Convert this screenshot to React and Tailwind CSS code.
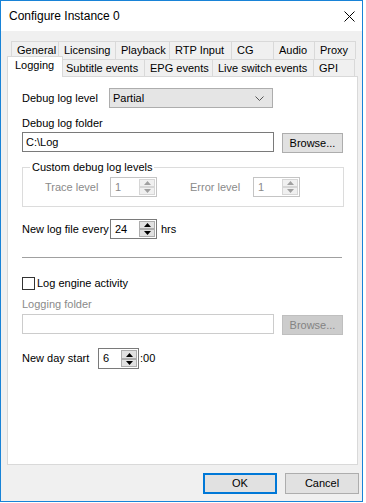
import React from "react";

function Arrow({ up, disabled }) {
  return (
    <svg width="7" height="4" viewBox="0 0 7 4">
      <path
        d={up ? "M3.5 0L7 4H0z" : "M0 0H7L3.5 4z"}
        fill={disabled ? "#a0a0a0" : "#000"}
      />
    </svg>
  );
}

function Spin({ value, w, disabled }) {
  return (
    <div
      className={`flex h-[20px] bg-white border ${w} ${
        disabled ? "border-[#c4c4c4] text-[#8a8a8a]" : "border-[#7a7a7a] text-black"
      }`}
    >
      <div className="flex-1 flex items-center pl-[4px]">{value}</div>
      <div className="flex flex-col w-[17px] py-[1px] pr-[1px] gap-[0px]">
        <div
          className={`h-[9px] flex items-center justify-center border ${
            disabled ? "bg-[#f0f0f0] border-[#d6d6d6]" : "bg-[#e1e1e1] border-[#adadad]"
          }`}
        >
          <Arrow up disabled={disabled} />
        </div>
        <div
          className={`h-[8px] flex items-center justify-center border ${
            disabled ? "bg-[#f0f0f0] border-[#d6d6d6]" : "bg-[#e1e1e1] border-[#adadad]"
          }`}
        >
          <Arrow disabled={disabled} />
        </div>
      </div>
    </div>
  );
}

const row1 = [
  ["General", "w-[47px]"],
  ["Licensing", "w-[57px]"],
  ["Playback", "w-[54px]"],
  ["RTP Input", "w-[62px]"],
  ["CG", "w-[42px]"],
  ["Audio", "w-[41px]"],
];

const row2 = [
  ["EPG events", "w-[68px]"],
  ["Live switch events", "w-[101px]"],
];

export default function App() {
  return (
    <div className="w-[366px] h-[503px] bg-white">
      <div className="w-[363px] h-[502px] border border-[#1883d7] bg-[#f0f0f0] flex flex-col font-['Liberation_Sans',Arial,sans-serif] text-[11px] leading-[13px] text-black">
        {/* title bar */}
        <div className="h-[30px] bg-white flex items-center justify-between pl-[8px] pr-[6px]">
          <span className="text-[12px]">Configure Instance 0</span>
          <svg width="11" height="11" viewBox="0 0 11 11" className="mr-[1px]">
            <path d="M0.5 0.5L10.5 10.5M10.5 0.5L0.5 10.5" stroke="#000" strokeWidth="1" />
          </svg>
        </div>

        {/* tabs row 1 */}
        <div className="flex ml-[10px] mt-[10px] h-[18px]">
          {row1.map(([t, w]) => (
            <div
              key={t}
              className={`${w} border-l border-t border-[#d9d9d9] flex items-center pl-[5px]`}
            >
              {t}
            </div>
          ))}
          <div className="w-[42px] border-l border-t border-r border-[#d9d9d9] flex items-center pl-[5px]">
            Proxy
          </div>
        </div>

        {/* tabs row 2 */}
        <div className="flex ml-[6px] h-[17px] items-end">
          <div className="relative z-10 w-[56px] h-[21px] -mb-[1px] self-end bg-white border-l border-t border-r border-[#d9d9d9] pl-[7px] pt-[2px]">
            Logging
          </div>
          <div className="w-[81px] h-[17px] border-t border-[#d9d9d9] flex items-center pl-[3px]">
            Subtitle events
          </div>
          {row2.map(([t, w]) => (
            <div
              key={t}
              className={`${w} h-[17px] border-l border-t border-[#d9d9d9] flex items-center pl-[5px]`}
            >
              {t}
            </div>
          ))}
          <div className="w-[42px] h-[17px] border-l border-t border-r border-[#d9d9d9] flex items-center pl-[5px]">
            GPI
          </div>
        </div>

        {/* panel */}
        <div className="ml-[6px] w-[351px] h-[389px] bg-white border border-[#d9d9d9] flex flex-col pl-[14px]">
          <div className="mt-[11px] h-[20px] flex items-center">
            <span className="w-[87px]">Debug log level</span>
            <div className="w-[164px] h-[20px] bg-[#e5e5e5] border border-[#adadad] flex items-center justify-between pl-[3px] pr-[8px]">
              <span>Partial</span>
              <svg width="9" height="5" viewBox="0 0 9 5">
                <path d="M0.5 0.5L4.5 4.5L8.5 0.5" stroke="#555" fill="none" strokeWidth="1" />
              </svg>
            </div>
          </div>

          <div className="mt-[8px] h-[15px] flex items-center">Debug log folder</div>
          <div className="mt-[1px] flex items-start">
            <div className="w-[252px] h-[20px] border border-[#7a7a7a] flex items-center pl-[3px]">
              C:\Log
            </div>
            <div className="ml-[8px] mt-[1px] w-[61px] h-[20px] bg-[#e1e1e1] border border-[#adadad] flex items-center justify-center">
              Browse...
            </div>
          </div>

          {/* group box */}
          <div className="relative mt-[14px] w-[322px] h-[40px] border border-[#dcdcdc] flex items-start pt-[9px]">
            <span className="absolute -top-[7px] left-[7px] bg-white px-[2px]">
              Custom debug log levels
            </span>
            <div className="flex items-center h-[20px] ml-[22px] text-[#8a8a8a]">
              <span className="w-[65px]">Trace level</span>
              <Spin value="1" w="w-[47px]" disabled />
              <span className="ml-[33px] w-[63px]">Error level</span>
              <Spin value="1" w="w-[47px]" disabled />
            </div>
          </div>

          <div className="mt-[12px] flex items-center h-[20px]">
            <span className="w-[88px]">New log file every</span>
            <Spin value="24" w="w-[47px]" />
            <span className="ml-[4px]">hrs</span>
          </div>

          <div className="mt-[18px] w-[320px] h-px bg-[#a0a0a0]" />

          <div className="mt-[19px] flex items-center h-[13px]">
            <div className="w-[13px] h-[13px] border border-[#333] bg-white" />
            <span className="ml-[2px]">Log engine activity</span>
          </div>

          <div className="mt-[7px] h-[15px] flex items-center text-[#8a8a8a]">Logging folder</div>
          <div className="mt-[2px] flex items-start">
            <div className="w-[252px] h-[20px] border border-[#cccccc]" />
            <div className="ml-[8px] mt-[1px] w-[61px] h-[20px] bg-[#cccccc] border border-[#bfbfbf] text-[#838383] flex items-center justify-center">
              Browse...
            </div>
          </div>

          <div className="mt-[13px] flex items-center h-[21px]">
            <span className="w-[76px]">New day start</span>
            <Spin value="6" w="w-[41px] h-[21px]" />
            <span className="ml-[1px]">:00</span>
          </div>
        </div>

        {/* buttons */}
        <div className="mt-[8px] flex justify-end gap-[8px] pr-[3px]">
          <div className="w-[74px] h-[21px] bg-[#e1e1e1] border-2 border-[#0078d7] flex items-center justify-center">
            OK
          </div>
          <div className="w-[74px] h-[21px] bg-[#e1e1e1] border border-[#adadad] flex items-center justify-center">
            Cancel
          </div>
        </div>
      </div>
    </div>
  );
}
